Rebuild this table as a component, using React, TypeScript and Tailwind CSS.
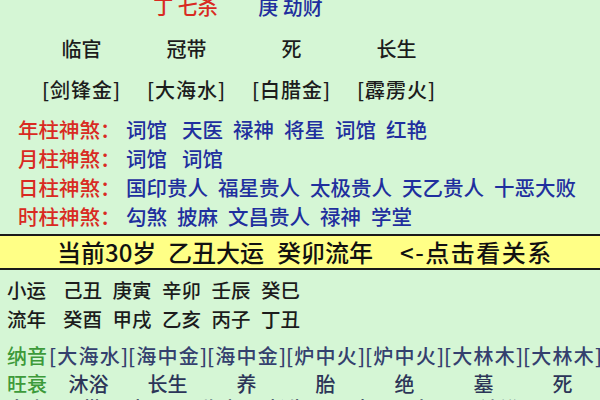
export default function App() {
  const col = "w-[105px] text-center shrink-0";
  const cell = "w-[79px] shrink-0 text-center";
  return (
    <div className="w-[600px] h-[400px] overflow-hidden bg-[#d5f6d5] font-['Noto_Sans_CJK_SC',sans-serif] font-medium text-[#1c1c1c]">
      <div className="-mt-[7px] flex flex-col whitespace-nowrap">
        {/* row 1 */}
        <div className="h-[28px] flex items-center pl-[133px] text-[20px]">
          <span className={`${col} text-[#d92a22]`}>丁 七杀</span>
          <span className={`${col} text-[#1f2f9e]`}>庚 劫财</span>
        </div>
        {/* row 2 */}
        <div className="h-[28px] mt-[14px] flex items-center pl-[29px] text-[20px]">
          <span className={col}>临官</span>
          <span className={col}>冠带</span>
          <span className={col}>死</span>
          <span className={col}>长生</span>
        </div>
        {/* row 3 */}
        <div className="h-[28px] mt-[13px] flex items-center pl-[29px] text-[20px] tracking-[1px]">
          <span className={col}>[剑锋金]</span>
          <span className={col}>[大海水]</span>
          <span className={col}>[白腊金]</span>
          <span className={col}>[霹雳火]</span>
        </div>
        {/* shensha */}
        <div className="mt-[11px] flex flex-col text-[20.5px]">
          {[
            ["年柱神煞：", ["词馆", "天医", "禄神", "将星", "词馆", "红艳"]],
            ["月柱神煞：", ["词馆", "词馆"]],
            ["日柱神煞：", ["国印贵人", "福星贵人", "太极贵人", "天乙贵人", "十恶大败"]],
            ["时柱神煞：", ["勾煞", "披麻", "文昌贵人", "禄神", "学堂"]],
          ].map(([label, items], i) => (
            <div key={i} className="h-[29px] flex items-center pl-[18px]">
              <span className="w-[108px] shrink-0 text-[#d92a22]">{label as string}</span>
              <span className="flex gap-[10px] text-[#1f2f9e]">
                {(items as string[]).map((t, j) => (
                  <span key={j} className={j === 1 && i < 2 ? "ml-[5px]" : ""}>{t}</span>
                ))}
              </span>
            </div>
          ))}
        </div>
        {/* yellow bar */}
        <div className="mt-[3px] h-[36px] border-y-2 border-[#1a1a1a] bg-[#ffff86] flex items-center pl-[57px] text-[24px] text-[#111]">
          <span className="w-[111px] shrink-0">当前30岁</span>
          <span className="w-[109px] shrink-0">乙丑大运</span>
          <span className="w-[123px] shrink-0">癸卯流年</span>
          <span className="tracking-[1.5px]">&lt;-点击看关系</span>
        </div>
        {/* xiaoyun */}
        <div className="mt-[5px] h-[29px] flex items-center pl-[7px] text-[19.5px]">
          <span className="w-[56px] shrink-0">小运</span>
          {["己丑", "庚寅", "辛卯", "壬辰", "癸巳"].map((t) => (
            <span key={t} className="w-[49.5px] shrink-0">{t}</span>
          ))}
        </div>
        <div className="h-[29px] flex items-center pl-[7px] text-[19.5px]">
          <span className="w-[56px] shrink-0">流年</span>
          {["癸酉", "甲戌", "乙亥", "丙子", "丁丑"].map((t) => (
            <span key={t} className="w-[49.5px] shrink-0">{t}</span>
          ))}
        </div>
        {/* nayin */}
        <div className="mt-[9px] h-[28px] flex items-center pl-[7px] text-[20px]">
          <span className="w-[42px] shrink-0 text-[#3d9a3a]">纳音</span>
          {["大海水", "海中金", "海中金", "炉中火", "炉中火", "大林木", "大林木"].map((t, i) => (
            <span key={i} className="w-[79px] shrink-0 tracking-[1.2px] text-[#34406e]">
              [{t}]
            </span>
          ))}
        </div>
        <div className="h-[28px] flex items-center pl-[7px] text-[20px]">
          <span className="w-[42px] shrink-0 text-[#3d9a3a]">旺衰</span>
          {["沐浴", "长生", "养", "胎", "绝", "墓", "死"].map((t, i) => (
            <span key={i} className={`${cell} text-[#2c3558]`}>{t}</span>
          ))}
        </div>
        <div className="-mt-[3px] h-[28px] flex items-center pl-[7px] text-[20px] text-[#2c3558]">
          <span className="w-[55px] shrink-0">自坐</span>
          <span className="w-[66px] shrink-0">冠带</span>
          <span className="w-[72px] shrink-0">帝旺</span>
          <span className="w-[67px] shrink-0">临官</span>
          <span className="w-[86px] shrink-0">长生</span>
          <span className="w-[57px] shrink-0">衰</span>
          <span className="w-[70px] shrink-0">病</span>
          <span className="w-[70px] shrink-0">沐浴</span>
        </div>
      </div>
    </div>
  );
}
